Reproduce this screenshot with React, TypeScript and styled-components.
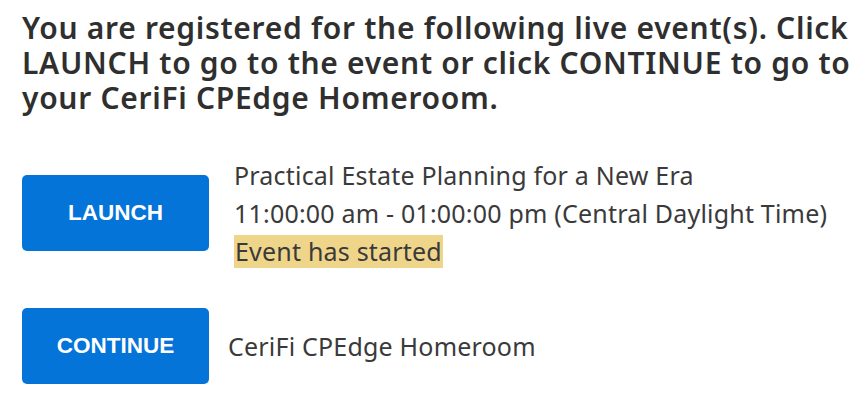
import React from "react";
import styled, { createGlobalStyle } from "styled-components";

const GlobalStyle = createGlobalStyle`
  html, body {
    margin: 0;
    padding: 0;
    background: #ffffff;
  }
  body {
    font-family: "Noto Sans", "Open Sans", Arial, sans-serif;
    color: #333333;
  }
`;

const Page = styled.main`
  padding: 10px 0 0 22px;
  display: flex;
  flex-direction: column;
`;

const Intro = styled.h1`
  margin: 0 0 41px 0;
  font-size: 30px;
  line-height: 35px;
  font-weight: 600;
  letter-spacing: 0.7px;
  color: #2f2f2f;
  white-space: nowrap;
`;

const EventList = styled.div`
  display: flex;
  flex-direction: column;
  gap: 38px;
`;

const Row = styled.div<{ $gap: number }>`
  display: flex;
  align-items: center;
  gap: ${(p) => p.$gap}px;
`;

const ActionButton = styled.button`
  flex: none;
  width: 187px;
  height: 76px;
  border: none;
  border-radius: 5px;
  background: #0474d8;
  color: #ffffff;
  font-family: "Liberation Sans", Arial, sans-serif;
  font-weight: 700;
  font-size: 22.5px;
  cursor: pointer;
  padding: 0;
`;

const Details = styled.div`
  display: flex;
  flex-direction: column;
  font-size: 25px;
  line-height: 38px;
  letter-spacing: 0.2px;
  color: #3a3a3a;
`;

const Line = styled.div`
  white-space: nowrap;
`;

const Status = styled.span`
  display: inline-block;
  line-height: 33px;
  background: #efd58a;
  padding: 0 1px;
`;

const Label = styled.span`
  font-size: 25px;
  letter-spacing: 0.2px;
  color: #3a3a3a;
  white-space: nowrap;
`;

export default function App() {
  return (
    <>
      <GlobalStyle />
      <Page>
        <Intro>
          You are registered for the following live event(s). Click
          <br />
          LAUNCH to go to the event or click CONTINUE to go to
          <br />
          your CeriFi CPEdge Homeroom.
        </Intro>
        <EventList>
          <Row $gap={25}>
            <ActionButton>LAUNCH</ActionButton>
            <Details>
              <Line>Practical Estate Planning for a New Era</Line>
              <Line>11:00:00 am - 01:00:00 pm (Central Daylight Time)</Line>
              <Line>
                <Status>Event has started</Status>
              </Line>
            </Details>
          </Row>
          <Row $gap={19}>
            <ActionButton>CONTINUE</ActionButton>
            <Label>CeriFi CPEdge Homeroom</Label>
          </Row>
        </EventList>
      </Page>
    </>
  );
}
